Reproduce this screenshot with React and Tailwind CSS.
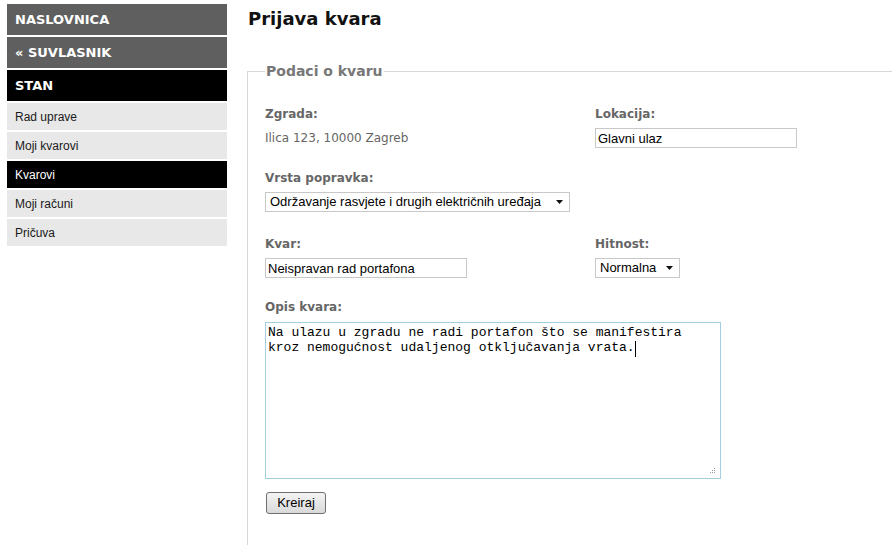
import React from 'react';

const MENU = [
  { label: 'NASLOVNICA', kind: 'head' },
  { label: '« SUVLASNIK', kind: 'head' },
  { label: 'STAN', kind: 'headActive' },
  { label: 'Rad uprave', kind: 'item' },
  { label: 'Moji kvarovi', kind: 'item' },
  { label: 'Kvarovi', kind: 'itemActive' },
  { label: 'Moji računi', kind: 'item' },
  { label: 'Pričuva', kind: 'item' },
];

function MenuRow({ label, kind }) {
  if (kind === 'head' || kind === 'headActive') {
    return (
      <div
        className={`h-[31px] mb-[2px] flex items-center pl-[8px] text-white font-bold text-[13px] font-['DejaVu_Sans',sans-serif] ${
          kind === 'headActive' ? 'bg-black' : 'bg-[#5f5f5f]'
        }`}
      >
        {label}
      </div>
    );
  }
  return (
    <div
      className={`h-[27px] mb-[2px] flex items-center pl-[8px] text-[12px] font-['Liberation_Sans',Arial,sans-serif] ${
        kind === 'itemActive' ? 'bg-black text-white' : 'bg-[#e8e8e8] text-[#1a1a1a]'
      }`}
    >
      {label}
    </div>
  );
}

function Label({ children }) {
  return (
    <div className="text-[12px] leading-[16px] font-bold text-[#666] font-['DejaVu_Sans',sans-serif]">
      {children}
    </div>
  );
}

function Select({ value, width }) {
  return (
    <div className={`relative mt-[6px] h-[20px] ${width}`}>
      <select
        defaultValue={value}
        className="appearance-none block w-full h-full border border-[#c8c8c8] bg-white pl-[4px] pr-[18px] py-0 leading-[18px] text-[13px] text-black font-['Liberation_Sans',Arial,sans-serif] outline-none"
      >
        <option>{value}</option>
      </select>
      <svg className="absolute right-[7px] top-[8px] pointer-events-none" width="7" height="4" viewBox="0 0 7 4">
        <path d="M0 0h7L3.5 4z" fill="#111" />
      </svg>
    </div>
  );
}

function TextInput({ value, width }) {
  return (
    <input
      type="text"
      defaultValue={value}
      className={`block mt-[6px] h-[20px] ${width} border border-[#c8c8c8] bg-white px-[2px] text-[13px] text-black font-['Liberation_Sans',Arial,sans-serif] outline-none`}
    />
  );
}

export default function App() {
  return (
    <div className="flex w-[892px] h-[545px] overflow-hidden bg-white pt-[4px] pl-[7px]">
      {/* Sidebar */}
      <nav className="w-[220px] shrink-0">
        {MENU.map((m) => (
          <MenuRow key={m.label} {...m} />
        ))}
      </nav>

      {/* Main */}
      <main className="ml-[20px] flex-1 flex flex-col">
        <h1 className="ml-[1px] mt-[4px] text-[18px] leading-[22px] font-bold text-[#111] font-['DejaVu_Sans',sans-serif]">
          Prijava kvara
        </h1>

        <fieldset className="mt-[32px] h-[500px] border-l border-t border-[#d8d8d8] pl-[17px] pt-[26px]">
          <legend className="px-[1px] text-[14px] leading-[18px] font-bold text-[#777] font-['DejaVu_Sans',sans-serif]">
            Podaci o kvaru
          </legend>

          <div className="grid grid-cols-[330px_1fr]">
            <div>
              <Label>Zgrada:</Label>
              <div className="mt-[8px] text-[12px] leading-[16px] text-[#666] font-['DejaVu_Sans',sans-serif]">
                Ilica 123, 10000 Zagreb
              </div>
            </div>
            <div>
              <Label>Lokacija:</Label>
              <TextInput value="Glavni ulaz" width="w-[202px]" />
            </div>
          </div>

          <div className="mt-[22px]">
            <Label>Vrsta popravka:</Label>
            <Select value="Održavanje rasvjete i drugih električnih uređaja" width="w-[305px]" />
          </div>

          <div className="mt-[24px] grid grid-cols-[330px_1fr]">
            <div>
              <Label>Kvar:</Label>
              <TextInput value="Neispravan rad portafona" width="w-[202px]" />
            </div>
            <div>
              <Label>Hitnost:</Label>
              <Select value="Normalna" width="w-[85px]" />
            </div>
          </div>

          <div className="mt-[21px]">
            <Label>Opis kvara:</Label>
            <div className="relative mt-[7px] w-[456px] h-[157px]">
              <textarea
                defaultValue={'Na ulazu u zgradu ne radi portafon što se manifestira\nkroz nemogućnost udaljenog otključavanja vrata.'}
                className="block w-full h-full resize-none border border-[#a4cfe2] bg-white p-[2px] text-[13px] leading-[15px] text-black font-['Liberation_Mono','Courier_New',monospace] outline-none"
              />
              {/* caret */}
              <div className="absolute left-[370px] top-[19px] w-[1px] h-[16px] bg-black" />
              {/* resize grip */}
              <svg className="absolute right-[5px] bottom-[4px]" width="7" height="7" viewBox="0 0 7 7">
                <rect x="5" y="0" width="1" height="1" fill="#999" />
                <rect x="3" y="2" width="1" height="1" fill="#999" />
                <rect x="5" y="2" width="1" height="1" fill="#999" />
                <rect x="1" y="4" width="1" height="1" fill="#999" />
                <rect x="3" y="4" width="1" height="1" fill="#999" />
                <rect x="5" y="4" width="1" height="1" fill="#999" />
              </svg>
            </div>
          </div>

          <button
            type="button"
            className="mt-[13px] ml-[1px] w-[60px] h-[22px] rounded-[3px] border border-[#707070] bg-gradient-to-b from-[#f4f4f4] to-[#d9d9d9] text-[13px] text-black font-['Liberation_Sans',Arial,sans-serif]"
          >
            Kreiraj
          </button>
        </fieldset>
      </main>
    </div>
  );
}
